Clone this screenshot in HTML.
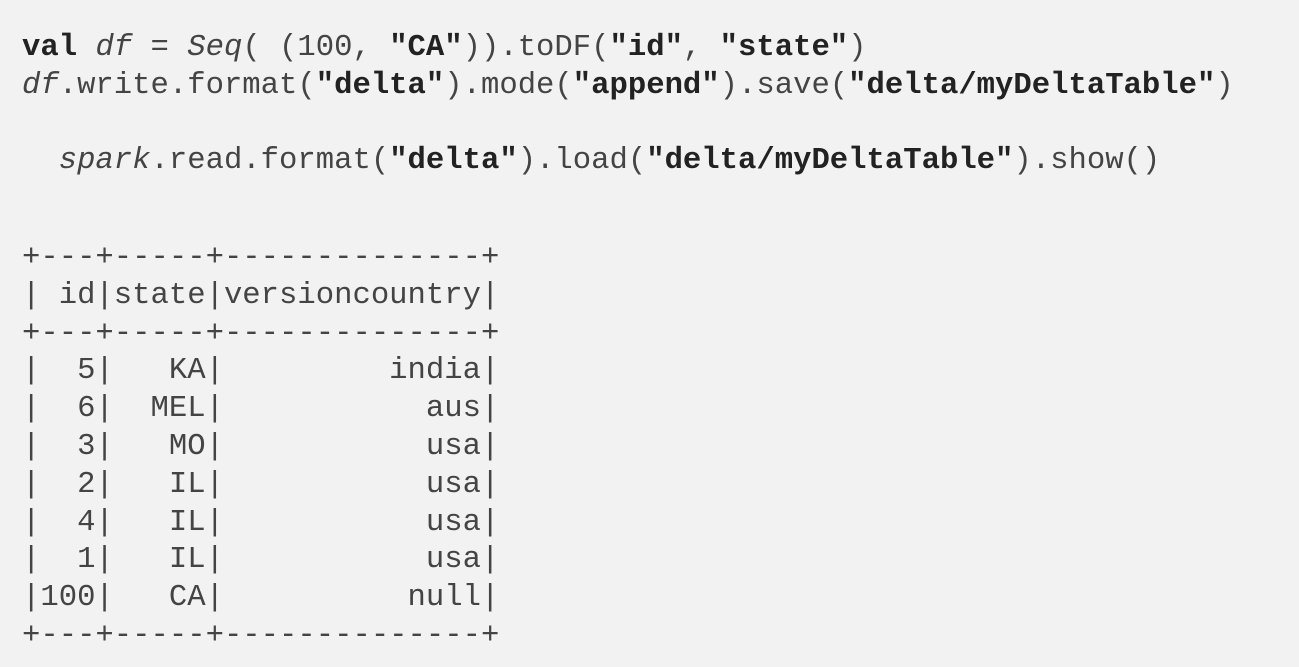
<!DOCTYPE html>
<html><head><style>
html,body{margin:0;padding:0;background:#f2f2f2;width:1299px;height:667px;overflow:hidden}
pre{position:absolute;left:22px;margin:0;font-family:"Liberation Mono","Courier New",monospace;font-size:30.6px;line-height:37.8px;color:#444;white-space:pre}
b{font-weight:bold;color:#222}
i{font-style:italic}
</style></head><body>
<pre style="top:30px"><b>val</b> <i>df</i> = <i>Seq</i>( (100, <b>"CA"</b>)).toDF(<b>"id"</b>, <b>"state"</b>)
<i>df</i>.write.format(<b>"delta"</b>).mode(<b>"append"</b>).save(<b>"delta/myDeltaTable"</b>)

  <i>spark</i>.read.format(<b>"delta"</b>).load(<b>"delta/myDeltaTable"</b>).show()</pre>
<pre style="top:240px">+---+-----+--------------+
| id|state|versioncountry|
+---+-----+--------------+
|  5|   KA|         india|
|  6|  MEL|           aus|
|  3|   MO|           usa|
|  2|   IL|           usa|
|  4|   IL|           usa|
|  1|   IL|           usa|
|100|   CA|          null|
+---+-----+--------------+</pre>
</body></html>
